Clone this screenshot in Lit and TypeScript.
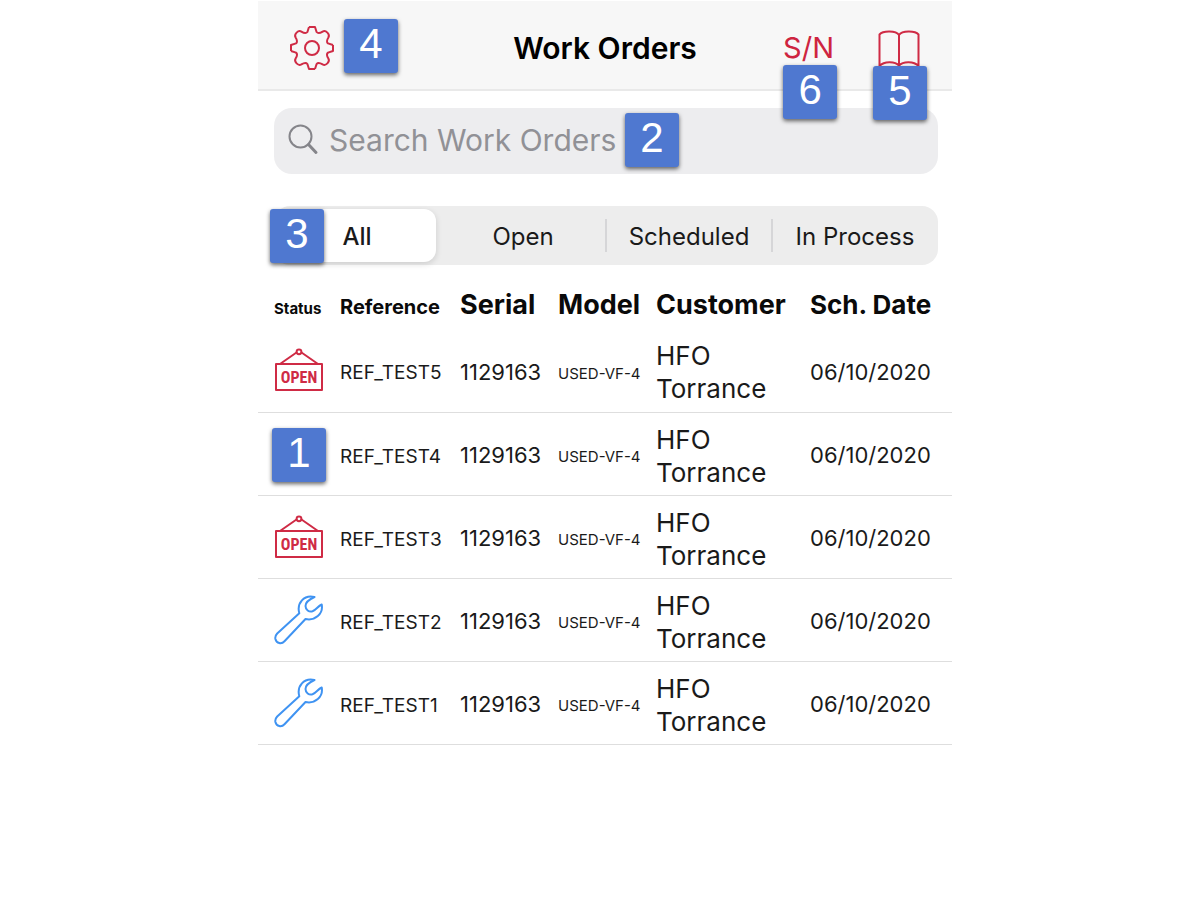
import { LitElement, html, svg, css } from "lit";
import { customElement, property, state } from "lit/decorators.js";

type Status = "open" | "process" | "none";

interface WorkOrder {
  status: Status;
  reference: string;
  serial: string;
  model: string;
  customer: string;
  date: string;
  marker?: string;
}

const order = (n: number, status: Status, marker?: string): WorkOrder => ({
  status,
  reference: `REF_TEST${n}`,
  serial: "1129163",
  model: "USED-VF-4",
  customer: "HFO Torrance",
  date: "06/10/2020",
  marker,
});

const ORDERS: WorkOrder[] = [
  order(5, "open"),
  order(4, "none", "1"),
  order(3, "open"),
  order(2, "process"),
  order(1, "process"),
];

const FILTERS = ["All", "Open", "Scheduled", "In Process"];

const gearQuarter =
  "M-3 -21 L3 -21 L4.6 -16 C6 -14.2 8 -14.8 10.6 -16.4 Q13 -17.8 15.4 -15.4 Q17.8 -13 16.4 -10.6 C14.8 -8 14.2 -6 16 -4.6 L21 -3";

const gearIcon = html`<svg class="icon" width="44" height="44" viewBox="-22 -22 44 44" aria-hidden="true">
  ${[0, 90, 180, 270].map((a) => svg`<path d=${gearQuarter} transform="rotate(${a})" />`)}
  <path d="M-21 -3V3M21 -3V3M-3 21H3" />
  <circle r="7" />
</svg>`;

const bookIcon = html`<svg class="icon" width="42" height="38" viewBox="0 0 42 38" aria-hidden="true">
  <path d="M21 6C18 1.5 5 1.5 1.5 5.5V37C6 32 17 32 21 36.5C25 32 36 32 40.5 37V5.5C37 1.5 24 1.5 21 6V36.5" />
</svg>`;

const searchIcon = html`<svg class="glass" width="32" height="32" viewBox="0 0 32 32" aria-hidden="true">
  <circle cx="12.5" cy="12.5" r="11" />
  <path d="M20.5 20.5L28 28.5" stroke-width="3" />
</svg>`;

const openIcon = html`<svg class="icon" width="50" height="44" viewBox="0 0 50 44" role="img" aria-label="Open">
  <rect x="2" y="16" width="46" height="26" />
  <path d="M6 16L22.5 4.5M44 16L27.5 4.5" />
  <circle cx="25" cy="3.8" r="2.4" />
  <text class="sign" x="25" y="35" text-anchor="middle">OPEN</text>
</svg>`;

const wrenchIcon = html`<svg class="wrench" width="50" height="50" viewBox="0 0 50 50" role="img" aria-label="In process">
  <path
    d="M40.5 2C36 4 31.5 7 31.5 11C31.5 14.5 35 17.5 38.5 16.3C42 15 44 11 47.7 9.5C49.5 19 41 26 31.5 24L10.5 46.2C7.5 49.5 2.5 48.5 1.4 44C0.9 41.5 1.8 40 3.2 38.5L25.3 18.3C22.5 8 30 -0.5 40.5 2Z"
  />
</svg>`;

@customElement("callout-marker")
export class CalloutMarker extends LitElement {
  @property() label = "";

  static styles = css`
    :host {
      display: block;
      position: absolute;
      box-sizing: border-box;
      width: 54px;
      height: 54px;
      border-radius: 3px;
      background: #4f78d0;
      color: #fff;
      font: 400 42px/50px "Liberation Sans", Arial, sans-serif;
      text-align: center;
      box-shadow: 0 2px 4px rgba(0, 0, 0, 0.6);
      pointer-events: none;
      z-index: 2;
    }
  `;

  render() {
    return html`${this.label}`;
  }
}

@customElement("app-root")
export class AppRoot extends LitElement {
  @state() private filter = "All";

  static styles = css`
    :host {
      display: grid;
      grid-template-columns: 258fr 694fr 248fr;
      min-height: 100vh;
      background: #fff;
      color: #1a1a1a;
      font-family: Inter, "Liberation Sans", sans-serif;
    }
    * {
      box-sizing: border-box;
    }
    .panel {
      grid-column: 2;
      min-width: 0;
      padding-top: 1px;
    }
    button,
    input {
      font: inherit;
      color: inherit;
      border: 0;
      margin: 0;
      padding: 0;
      background: none;
    }
    .bar {
      display: grid;
      grid-template-columns: 1fr auto 1fr;
      align-items: center;
      height: 90px;
      padding: 6px 32px 0 32px;
      background: #f7f7f7;
      border-bottom: 2px solid #e9e9e9;
    }
    .title {
      margin: 0;
      font-size: 30px;
      line-height: 40px;
      font-weight: 600;
      color: #000;
    }
    .side {
      display: flex;
      align-items: center;
    }
    .right {
      justify-content: flex-end;
      gap: 44px;
    }
    .slot {
      position: relative;
      display: flex;
    }
    .action {
      display: block;
      color: #ce2440;
      font-size: 29px;
      line-height: 40px;
    }
    .icon {
      display: block;
      fill: none;
      stroke: #cf2b45;
      stroke-width: 2;
      stroke-linejoin: round;
    }
    .sign {
      fill: #cf2b45;
      stroke: none;
      font: 700 16px "Roboto Condensed", Roboto, sans-serif;
    }
    .wrench {
      display: block;
      fill: none;
      stroke: #3f93f2;
      stroke-width: 2;
      stroke-linejoin: round;
    }
    .tools {
      padding: 17px 14px 0 16px;
    }
    .search {
      position: relative;
      display: flex;
      align-items: center;
      gap: 9px;
      height: 66px;
      padding: 0 14px 2px;
      border-radius: 18px;
      background: #ededef;
    }
    .glass {
      flex: none;
      fill: none;
      stroke: #85858a;
      stroke-width: 2;
      stroke-linecap: round;
    }
    .field {
      flex: 1;
      min-width: 0;
      font-size: 30px;
      line-height: 40px;
      outline: none;
    }
    .field::placeholder {
      color: #919196;
      opacity: 1;
    }
    .segments {
      position: relative;
      display: grid;
      grid-template-columns: repeat(4, 1fr);
      height: 59px;
      margin-top: 32px;
      border-radius: 16px;
      background: #ededed;
    }
    .segment {
      position: relative;
      margin: 3px 4px;
      padding-top: 2px;
      border-radius: 12px;
      font-size: 24px;
      line-height: 32px;
      white-space: nowrap;
    }
    .segment.on {
      background: #fff;
      font-weight: 500;
      box-shadow: 0 2px 6px rgba(0, 0, 0, 0.14);
    }
    .segment:not(.on) + .segment:not(.on)::before {
      content: "";
      position: absolute;
      left: -5px;
      top: 10px;
      bottom: 10px;
      width: 2px;
      background: #d6d6d8;
    }
    .orders {
      width: 100%;
      border-collapse: collapse;
      table-layout: fixed;
    }
    .c1 {
      width: 66px;
    }
    .c2 {
      width: 120px;
    }
    .c3,
    .c4 {
      width: 98px;
    }
    .c5 {
      width: 154px;
    }
    .c6 {
      width: 158px;
    }
    th,
    td {
      padding: 0 0 0 16px;
      text-align: left;
      white-space: nowrap;
    }
    th {
      height: 64px;
      padding-top: 24px;
      color: #0a0a0a;
      font-size: 27px;
      line-height: 32px;
      font-weight: 700;
      vertical-align: top;
    }
    td {
      height: 83px;
      padding-top: 4px;
      border-bottom: 1px solid #dedede;
      font-size: 22px;
      line-height: 33px;
      vertical-align: middle;
    }
    .status {
      position: relative;
      padding-top: 0;
    }
    .customer {
      font-size: 26px;
      white-space: normal;
    }
    .t26 {
      font-size: 26px;
    }
    .t20 {
      font-size: 20px;
    }
    .t19 {
      font-size: 19px;
    }
    .t15 {
      font-size: 15px;
    }
    .m1 {
      left: 14px;
      top: 15px;
    }
    .m2 {
      left: 351px;
      top: 5px;
    }
    .m3 {
      left: -4px;
      top: 3px;
    }
    .m4 {
      left: 54px;
      top: -7px;
    }
    .m5 {
      left: -5px;
      top: 37px;
    }
    .m6 {
      left: 0;
      top: 37px;
    }
  `;

  private icon(status: Status) {
    if (status === "open") return openIcon;
    if (status === "process") return wrenchIcon;
    return "";
  }

  render() {
    return html`
      <main class="panel">
        <header class="bar">
          <div class="side">
            <div class="slot">
              <button class="action" aria-label="Settings">${gearIcon}</button>
              <callout-marker class="m4" label="4"></callout-marker>
            </div>
          </div>
          <h1 class="title">Work Orders</h1>
          <div class="side right">
            <div class="slot">
              <button class="action">S/N</button>
              <callout-marker class="m6" label="6"></callout-marker>
            </div>
            <div class="slot">
              <button class="action" aria-label="Manuals">${bookIcon}</button>
              <callout-marker class="m5" label="5"></callout-marker>
            </div>
          </div>
        </header>
        <div class="tools">
          <label class="search">
            ${searchIcon}
            <input class="field" type="text" placeholder="Search Work Orders" aria-label="Search Work Orders" />
            <callout-marker class="m2" label="2"></callout-marker>
          </label>
          <div class="segments" role="group" aria-label="Filter">
            ${FILTERS.map(
              (f) => html`<button
                class="segment ${f === this.filter ? "on" : ""}"
                aria-pressed=${f === this.filter}
                @click=${() => (this.filter = f)}
              >${f}</button>`
            )}
            <callout-marker class="m3" label="3"></callout-marker>
          </div>
        </div>
        <table class="orders">
          <colgroup>
            <col class="c1" /><col class="c2" /><col class="c3" /><col class="c4" /><col class="c5" /><col class="c6" />
          </colgroup>
          <thead>
            <tr>
              <th><span class="t15">Status</span></th>
              <th><span class="t20">Reference</span></th>
              <th>Serial</th>
              <th>Model</th>
              <th>Customer</th>
              <th><span class="t26">Sch. Date</span></th>
            </tr>
          </thead>
          <tbody>
            ${ORDERS.map(
              (o) => html`<tr>
                <td class="status">
                  ${this.icon(o.status)}
                  ${o.marker ? html`<callout-marker class="m1" label=${o.marker}></callout-marker>` : ""}
                </td>
                <td><span class="t19">${o.reference}</span></td>
                <td>${o.serial}</td>
                <td><span class="t15">${o.model}</span></td>
                <td class="customer">${o.customer}</td>
                <td>${o.date}</td>
              </tr>`
            )}
          </tbody>
        </table>
      </main>
    `;
  }
}
